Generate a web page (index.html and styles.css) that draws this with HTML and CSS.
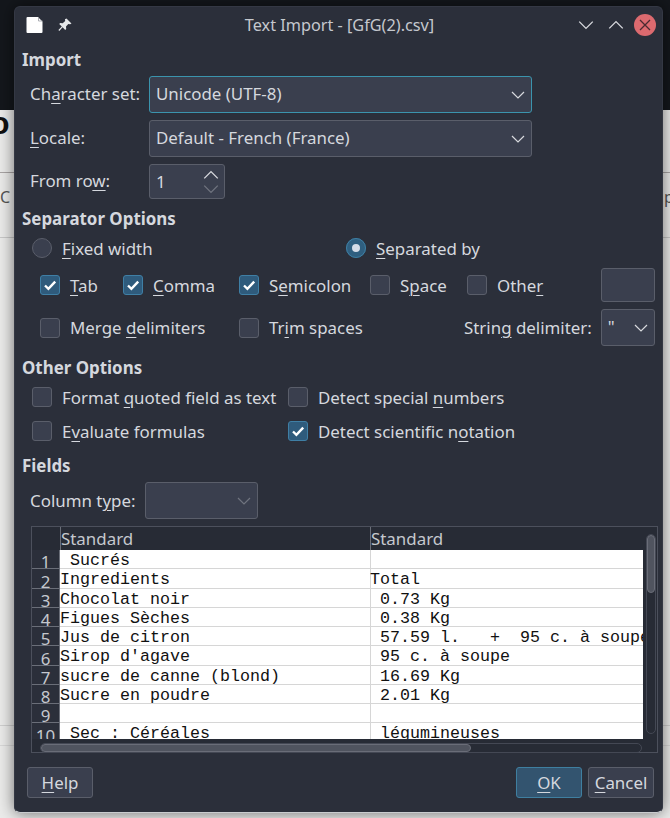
FILE: index.html
```html
<!DOCTYPE html>
<html lang="en">
<head>
    <meta charset="UTF-8">
    <meta name="viewport" content="width=device-width, initial-scale=1.0">
    <title>Text Import - [GfG(2).csv]</title>
    <link rel="stylesheet" href="styles.css">
</head>
<body>
    <svg class="sprites" width="0" height="0">
        <symbol id="chev-down" viewBox="0 0 16 16"><path d="M2 5l6 6 6-6" fill="none" stroke="currentColor" stroke-width="1.2"/></symbol>
        <symbol id="chev-up" viewBox="0 0 16 16"><path d="M2 11l6-6 6 6" fill="none" stroke="currentColor" stroke-width="1.2"/></symbol>
        <symbol id="check" viewBox="0 0 20 20"><path d="M5 10.5l3.4 3.3L15.2 6.6" fill="none" stroke="#fff" stroke-width="2.4"/></symbol>
    </svg>

    <div class="backdrop">
        <div class="backdrop-top"></div>
        <div class="backdrop-doc">
            <div class="doc-row doc-row-a"><span class="doc-big">o</span><span>&nbsp;</span></div>
            <div class="doc-row doc-row-b"><span>C</span><span>p</span></div>
            <div class="doc-row doc-row-c"></div>
            <div class="doc-row doc-row-d"></div>
            <div class="doc-row doc-row-e"></div>
        </div>
    </div>

    <div class="dialog">
        <div class="titlebar">
            <div class="title-left">
                <svg class="app-icon" width="18" height="18" viewBox="0 0 18 18"><path d="M1.5 1h10.500L16.500 5.500V16a1 1 0 0 1-1 1h-14a1 1 0 0 1-1-1V2a1 1 0 0 1 1-1z" fill="#fff"/><path d="M12.500 1v4h4" fill="none" stroke="#9a9da3" stroke-width="0.8"/></svg>
                <svg class="pin-icon" width="16" height="16" viewBox="0 0 16 16"><path d="M9.500 1.500l5 5-1.400.7-1.800-.3-2.300 2.600.2 2.500-1 1-2.600-2.700-3.300 3.700-.9-.9 3.400-3.500L2.200 7l1-1 2.500.2 2.500-2.300-.3-1.700z" fill="#e6e8ea"/></svg>
            </div>
            <div class="title-text">Text Import - [GfG(2).csv]</div>
            <div class="title-right">
                <svg class="win-btn" width="18" height="18"><use href="#chev-down"/></svg>
                <svg class="win-btn" width="18" height="18"><use href="#chev-up"/></svg>
                <span class="close-btn">
                    <svg width="12" height="12" viewBox="0 0 12 12"><path d="M1 1l10 10M11 1L1 11" stroke="#4a2a30" stroke-width="1.300"/></svg>
                </span>
            </div>
        </div>

        <div class="content">
            <h2 class="group-title">Import</h2>
            <div class="import-grid">
                <label>Ch<u>a</u>racter set:</label>
                <div class="combo combo-focus">Unicode (UTF-8)<svg class="combo-arrow" width="16" height="16"><use href="#chev-down"/></svg></div>
                <label><u>L</u>ocale:</label>
                <div class="combo">Default - French (France)<svg class="combo-arrow" width="16" height="16"><use href="#chev-down"/></svg></div>
                <label>From ro<u>w</u>:</label>
                <div class="spin">
                    <span>1</span>
                    <span class="spin-arrows">
                        <svg width="18" height="18"><use href="#chev-up"/></svg>
                        <svg class="dim" width="18" height="18"><use href="#chev-down"/></svg>
                    </span>
                </div>
            </div>

            <h2 class="group-title title-sep">Separator Options</h2>
            <div class="radio-row">
                <div class="opt opt-fixed"><span class="radio"></span><span><u>F</u>ixed width</span></div>
                <div class="opt"><span class="radio radio-on"></span><span><u>S</u>eparated by</span></div>
            </div>
            <div class="check-row">
                <div class="opt opt-tab"><span class="box box-on"><svg width="20" height="20"><use href="#check"/></svg></span><span><u>T</u>ab</span></div>
                <div class="opt opt-comma"><span class="box box-on"><svg width="20" height="20"><use href="#check"/></svg></span><span><u>C</u>omma</span></div>
                <div class="opt opt-semi"><span class="box box-on"><svg width="20" height="20"><use href="#check"/></svg></span><span>S<u>e</u>micolon</span></div>
                <div class="opt opt-space"><span class="box"></span><span>S<u>p</u>ace</span></div>
                <div class="opt opt-other"><span class="box"></span><span>Othe<u>r</u></span></div>
                <div class="other-field"></div>
            </div>
            <div class="merge-row">
                <div class="opt opt-merge"><span class="box"></span><span>Merge <u>d</u>elimiters</span></div>
                <div class="opt opt-trim"><span class="box"></span><span>Tr<u>i</u>m spaces</span></div>
                <div class="delim">
                    <label>Strin<u>g</u> delimiter:</label>
                    <div class="combo combo-small">"<svg class="combo-arrow" width="16" height="16"><use href="#chev-down"/></svg></div>
                </div>
            </div>

            <h2 class="group-title title-other">Other Options</h2>
            <div class="other-grid">
                <div class="opt"><span class="box"></span><span>Format <u>q</u>uoted field as text</span></div>
                <div class="opt"><span class="box"></span><span>Detect special <u>n</u>umbers</span></div>
                <div class="opt"><span class="box"></span><span>E<u>v</u>aluate formulas</span></div>
                <div class="opt"><span class="box box-on"><svg width="20" height="20"><use href="#check"/></svg></span><span>Detect scientific n<u>o</u>tation</span></div>
            </div>

            <h2 class="group-title title-fields">Fields</h2>
            <div class="coltype">
                <label>Column t<u>y</u>pe:</label>
                <div class="combo combo-type"><svg class="combo-arrow dim" width="16" height="16"><use href="#chev-down"/></svg></div>
            </div>

            <div class="preview">
                <div class="preview-main">
                    <div class="preview-head">
                        <span></span><span>Standard</span><span>Standard</span>
                    </div>
                    <div class="preview-body">
                        <div class="row"><span class="num">1</span><span class="cell"> Sucrés</span><span class="cell"></span></div>
                        <div class="row"><span class="num">2</span><span class="cell">Ingredients</span><span class="cell">Total</span></div>
                        <div class="row"><span class="num">3</span><span class="cell">Chocolat noir</span><span class="cell"> 0.73 Kg</span></div>
                        <div class="row"><span class="num">4</span><span class="cell">Figues Sèches</span><span class="cell"> 0.38 Kg</span></div>
                        <div class="row"><span class="num">5</span><span class="cell">Jus de citron</span><span class="cell"> 57.59 l.   +  95 c. à soupe</span></div>
                        <div class="row"><span class="num">6</span><span class="cell">Sirop d'agave</span><span class="cell"> 95 c. à soupe</span></div>
                        <div class="row"><span class="num">7</span><span class="cell">sucre de canne (blond)</span><span class="cell"> 16.69 Kg</span></div>
                        <div class="row"><span class="num">8</span><span class="cell">Sucre en poudre</span><span class="cell"> 2.01 Kg</span></div>
                        <div class="row"><span class="num">9</span><span class="cell"></span><span class="cell"></span></div>
                        <div class="row"><span class="num">10</span><span class="cell"> Sec : Céréales</span><span class="cell"> légumineuses</span></div>
                    </div>
                    <div class="hscroll"><div class="hthumb"></div></div>
                </div>
                <div class="vscroll"><div class="vthumb"></div></div>
            </div>

            <div class="buttons">
                <button class="btn btn-help"><u>H</u>elp</button>
                <div class="buttons-right">
                    <button class="btn btn-ok"><u>O</u>K</button>
                    <button class="btn btn-cancel"><u>C</u>ancel</button>
                </div>
            </div>
        </div>
    </div>
</body>
</html>
```

FILE: styles.css
```css
html, body {
    margin: 0;
    height: 100%;
}
body {
    width: 670px;
    height: 818px;
    overflow: hidden;
    position: relative;
    font-family: "Noto Sans", sans-serif;
    font-size: 16.9px;
    color: #d5d8de;
    background: #e9e9e8;
}
u {
    text-underline-offset: 3px;
    text-decoration-thickness: 1px;
}
.sprites {
    display: block;
    height: 0;
}

/* what shows behind the dialog */
.backdrop-top {
    height: 110px;
    background: #14171c;
}
.backdrop-doc {
    height: 708px;
    background: #ebebea;
    color: #555;
    font-size: 16px;
}
.doc-row {
    display: flex;
    justify-content: space-between;
    box-sizing: border-box;
}
.doc-row span {
    width: 14px;
}
.doc-row span:last-child {
    width: 6px;
    overflow: hidden;
}
.doc-row-a {
    height: 63px;
    border-bottom: 1px solid #a8a4a4;
}
.doc-row .doc-big {
    font-family: "Liberation Sans", sans-serif;
    font-weight: bold;
    font-size: 32px;
    line-height: 26px;
    color: #111;
    margin-left: -10px;
    width: 24px;
}
.doc-row-b {
    height: 65px;
    line-height: 48px;
    border-bottom: 1px solid #c8c8c8;
}
.doc-row-c {
    height: 488px;
    border-bottom: 1px solid #cfcfcf;
}
.doc-row-d {
    height: 20px;
    border-bottom: 1px solid #d8d8d8;
}

.dialog {
    position: absolute;
    left: 14px;
    top: 6px;
    width: 649px;
    height: 807px;
    box-sizing: border-box;
    background: #2b2f3a;
    border: 1px solid #343844;
    border-bottom: 1px solid #c9cbce;
    border-radius: 6px;
    box-shadow: 0 0 16px rgba(0, 0, 0, 0.55);
}

.titlebar {
    height: 36px;
    display: flex;
    align-items: center;
    justify-content: space-between;
    position: relative;
    padding: 0 6px 0 11px;
}
.title-left, .title-right {
    display: flex;
    align-items: center;
}
.title-left {
    gap: 13px;
}
.title-right {
    gap: 12px;
    color: #d8dade;
}
.title-text {
    position: absolute;
    left: 2px;
    right: 0;
    top: 6px;
    text-align: center;
    font-size: 16.25px;
    line-height: 24px;
    color: #c5c8ce;
}
.close-btn {
    width: 22px;
    height: 22px;
    margin-left: -2.5px;
    border-radius: 50%;
    background: #dc6a6f;
    display: flex;
    align-items: center;
    justify-content: center;
}

.content {
    padding: 0 7px;
}
.group-title {
    margin: 0;
    font-size: 16.9px;
    line-height: 22px;
    font-weight: bold;
    color: #d5d8de;
}
.group-title:first-child {
    margin-top: 6px;
}

.import-grid {
    display: grid;
    grid-template-columns: 119px 383px;
    grid-template-rows: 37px 37px 35px;
    row-gap: 7px;
    margin: 5px 0 0 8px;
    align-items: center;
}
.import-grid label {
    margin-bottom: 2px;
}
label {
    line-height: 22px;
    color: #d5d8de;
}
.combo {
    position: relative;
    box-sizing: border-box;
    height: 37px;
    line-height: 34px;
    padding-left: 6px;
    background: #3a3f4e;
    border: 1px solid #5a5e6a;
    border-radius: 3px;
}
.combo-focus {
    border-color: #3b94ad;
}
.combo-arrow {
    position: absolute;
    right: 5px;
    top: 10px;
    color: #d8dade;
}
.dim {
    color: #70747f;
}
.spin {
    box-sizing: border-box;
    width: 76px;
    height: 35px;
    display: flex;
    justify-content: space-between;
    align-items: center;
    padding: 0 4px 0 6px;
    background: #3a3f4e;
    border: 1px solid #5a5e6a;
    border-radius: 3px;
}
.spin-arrows {
    display: flex;
    flex-direction: column;
    color: #d8dade;
}
.spin-arrows svg {
    display: block;
    margin: -2px 0;
}
.spin-arrows .dim {
    color: #70747f;
}

.opt {
    display: flex;
    align-items: center;
    gap: 10px;
    white-space: nowrap;
}
.radio, .box {
    flex: none;
    box-sizing: border-box;
    width: 20px;
    height: 20px;
    background: #3a3f4e;
    border: 1px solid #5a5e6a;
}
.radio {
    border-radius: 50%;
}
.radio-on {
    background: #d5dde8;
    border: 6px solid #2f5f80;
    outline: 1px solid #3e7fa3;
    outline-offset: -1px;
}
.box {
    border-radius: 3px;
}
.box-on {
    background: #2f5b7c;
    border-color: #3f7fa5;
    position: relative;
}
.box-on svg {
    position: absolute;
    left: -1px;
    top: -1px;
}

.title-sep {
    margin-top: 9px;
}
.radio-row {
    display: flex;
    height: 22px;
    margin: 7px 0 0 10px;
}
.opt-fixed {
    width: 314px;
}
.check-row {
    display: flex;
    align-items: center;
    height: 34px;
    margin: 9px 0 0 18px;
}
.opt-tab { width: 83px; }
.opt-comma { width: 116px; }
.opt-semi { width: 131px; }
.opt-space { width: 97px; }
.opt-other { width: 134px; }
.other-field {
    box-sizing: border-box;
    width: 54px;
    height: 34px;
    background: #3a3f4e;
    border: 1px solid #5a5e6a;
    border-radius: 3px;
}
.merge-row {
    display: flex;
    align-items: center;
    height: 37px;
    margin: 7px 0 0 18px;
}
.opt-merge { width: 199px; }
.opt-trim { width: 225px; }
.delim {
    display: flex;
    align-items: center;
    gap: 9px;
}
.combo-small {
    width: 54px;
}

.title-other {
    margin-top: 11px;
}
.other-grid {
    display: grid;
    grid-template-columns: 256px auto;
    grid-auto-rows: 22px;
    row-gap: 12px;
    margin: 7px 0 0 10px;
}
.title-fields {
    margin-top: 13px;
}
.coltype {
    display: flex;
    align-items: center;
    gap: 9px;
    margin: 5px 0 0 8px;
}
.combo-type {
    width: 113px;
}

.preview {
    display: flex;
    box-sizing: border-box;
    width: 627px;
    height: 227px;
    margin: 7px 0 0 9px;
    border: 1px solid #4c505c;
    background: #272b35;
}
.preview-main {
    width: 611px;
}
.preview-head {
    display: grid;
    grid-template-columns: 28px 310px 273px;
    height: 23px;
    line-height: 23px;
    color: #c5c8ce;
}
.preview-head span {
    border-left: 1px solid #6a6e78;
    box-sizing: border-box;
}
.preview-head span:first-child {
    border-left: 0;
}
.preview-body {
    height: 189px;
    overflow: hidden;
}
.row {
    display: grid;
    grid-template-columns: 28px 310px 273px;
    grid-template-rows: 19.25px;
    height: 19.25px;
}
.num {
    background: #2b2f3a;
    color: #c5c8ce;
    text-align: center;
    line-height: 13px;
    padding-top: 5.25px;
    box-sizing: border-box;
    border-bottom: 1px solid #6a6e78;
    border-right: 1px solid #6a6e78;
}
.cell {
    box-sizing: border-box;
    background: #fff;
    color: #111;
    font-family: "Liberation Mono", monospace;
    font-size: 16.67px;
    line-height: 21px;
    white-space: pre;
    overflow: hidden;
    border-bottom: 1px solid #d6d6d6;
}
.cell:last-child {
    box-shadow: inset 1px 0 #d6d6d6;
}
.hscroll {
    box-sizing: border-box;
    height: 10px;
    margin: 4px 0 0 8px;
    border: 1px solid #444854;
    border-radius: 5px;
    width: 602px;
}
.hthumb {
    box-sizing: border-box;
    width: 430px;
    height: 8px;
    background: #50545f;
    border: 1px solid #6a6d78;
    border-radius: 4px;
}
.vscroll {
    box-sizing: border-box;
    width: 10px;
    height: 200px;
    margin: 7px 0 0 3px;
    border: 1px solid #444854;
    border-radius: 5px;
}
.vthumb {
    box-sizing: border-box;
    height: 58px;
    background: #50545f;
    border: 1px solid #6a6d78;
    border-radius: 4px;
}

.buttons {
    display: flex;
    justify-content: space-between;
    margin: 14px 1px 0 5px;
}
.buttons-right {
    display: flex;
    gap: 6px;
}
.btn {
    box-sizing: border-box;
    height: 31px;
    padding: 0;
    font: inherit;
    color: #d5d8de;
    background: #3a3f4e;
    border: 1px solid #5a5e6a;
    border-radius: 3px;
}
.btn-help { width: 66px; }
.btn-ok {
    width: 66px;
    background: #33546f;
    border-color: #3f7fa0;
}
.btn-cancel { width: 66px; }
```
